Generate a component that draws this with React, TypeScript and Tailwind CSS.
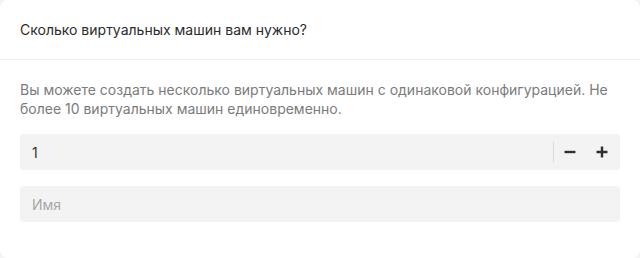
import { useState } from "react";

const Minus = () => (
  <svg width="12" height="12" viewBox="0 0 12 12" fill="none">
    <path d="M0.5 6H11.5" stroke="#303030" strokeWidth="2.4" />
  </svg>
);

const Plus = () => (
  <svg width="12" height="12" viewBox="0 0 12 12" fill="none">
    <path d="M0.5 6H11.5M6 0.5V11.5" stroke="#303030" strokeWidth="2.4" />
  </svg>
);

const App = () => {
  const [count, setCount] = useState(1);
  const [name, setName] = useState("");

  return (
    <div className="w-[640px] h-[258px] bg-[#f2f2f2] font-['Inter',sans-serif]">
      <div className="h-full rounded-lg bg-white flex flex-col">
        <div className="h-[60px] flex items-center px-5 border-b border-[#efefef]">
          <h2 className="text-sm leading-5 text-[#2b2b2b]">Сколько виртуальных машин вам нужно?</h2>
        </div>

        <div className="px-5 pt-5">
          <p className="text-sm leading-[19px] text-[#7b7b7b] mb-4">
            Вы можете создать несколько виртуальных машин с одинаковой конфигурацией. Не более 10 виртуальных машин единовременно.
          </p>

          <div className="h-9 flex items-center rounded bg-[#f3f3f3]">
            <input
              value={count}
              onChange={(e) => setCount(Number(e.target.value) || 0)}
              className="flex-1 h-full bg-transparent pl-3 text-sm text-[#333] outline-none"
            />
            <div className="w-px h-5 bg-[#d9d9d9]" />
            <button
              onClick={() => setCount(Math.max(1, count - 1))}
              className="w-8 h-full flex items-center justify-center"
            >
              <Minus />
            </button>
            <button
              onClick={() => setCount(Math.min(10, count + 1))}
              className="w-8 h-full flex items-center justify-center mr-[2px]"
            >
              <Plus />
            </button>
          </div>

          <input
            value={name}
            onChange={(e) => setName(e.target.value)}
            placeholder="Имя"
            className="mt-4 w-full h-9 rounded bg-[#f3f3f3] pl-3 text-sm text-[#333] placeholder-[#a8a8a8] outline-none"
          />
        </div>
      </div>
    </div>
  );
};

export default App;
